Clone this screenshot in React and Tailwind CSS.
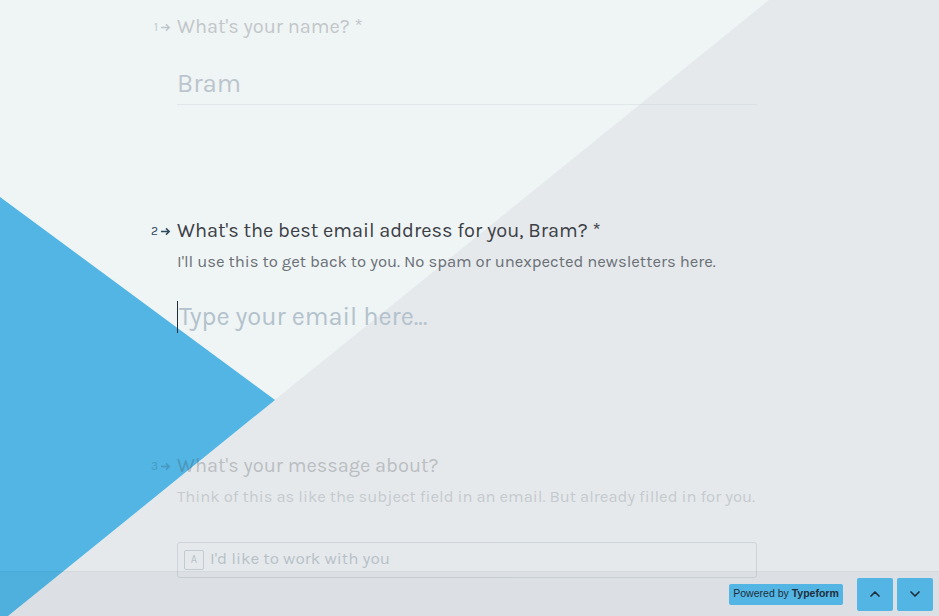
import { ChevronUp, ChevronDown } from "lucide-react";

const font = { fontFamily: "Karla, Lato, 'Noto Sans', sans-serif" };

function Num({ n }) {
  return (
    <span className="-ml-[28px] w-[28px] flex items-center text-[12px] text-[#2d4a5e] pr-[6px] justify-end gap-[3px]">
      <span>{n}</span>
      <svg width="10" height="9" viewBox="0 0 10 9" className="mt-[1px]">
        <path d="M0 4.5h8M5 1.4L8.2 4.5 5 7.6" stroke="currentColor" strokeWidth="1.5" fill="none" />
      </svg>
    </span>
  );
}

export default function App() {
  return (
    <div className="relative w-[939px] h-[616px] overflow-hidden bg-[#eff4f5]" style={font}>
      {/* background shapes */}
      <svg className="absolute inset-0 w-full h-full" viewBox="0 0 939 616" preserveAspectRatio="none">
        <polygon points="769,0 939,0 939,616 8,616" fill="#e5e9ec" />
        <polygon points="0,197 275,400 8,616 0,616" fill="#52b5e4" />
      </svg>

      <div className="relative ml-[177px] w-[580px] flex flex-col">
        {/* question 1 */}
        <div className="opacity-25 pt-[13px]">
          <div className="flex items-center h-[28px]">
            <Num n="1" />
            <span className="text-[20px] text-[#3c4046]">What's your name? *</span>
          </div>
          <div className="mt-[21px] h-[43px] flex items-center border-b border-[#b3c3ce] text-[26px] text-[#1f3a55]">
            Bram
          </div>
        </div>

        {/* question 2 */}
        <div className="mt-[112px]">
          <div className="flex items-center h-[28px]">
            <Num n="2" />
            <span className="text-[20px] text-[#3c4046]">What's the best email address for you, Bram? *</span>
          </div>
          <div className="mt-[5px] h-[24px] flex items-center text-[16.65px] text-[#6b7076]">
            I'll use this to get back to you. No spam or unexpected newsletters here.
          </div>
          <div className="mt-[22px] h-[42px] flex items-center text-[25.4px] text-[#b3c2cc]">
            <span className="w-[1px] h-[32px] bg-[#1f2d3a] mr-[1px]" />
            Type your email here...
          </div>
        </div>

        {/* question 3 */}
        <div className="mt-[114px] opacity-25">
          <div className="flex items-center h-[28px]">
            <Num n="3" />
            <span className="text-[20px] text-[#3c4046]">What's your message about?</span>
          </div>
          <div className="mt-[5px] h-[24px] flex items-center text-[16.65px] text-[#6b7076]">
            Think of this as like the subject field in an email. But already filled in for you.
          </div>
          <div className="mt-[33px] h-[36px] flex items-center gap-[6px] px-[6px] border border-[#8b9aa5] rounded-[3px]">
            <span className="w-[20px] h-[20px] flex items-center justify-center border border-[#5e7585] rounded-[2px] text-[11px] text-[#2d4a5e]">
              A
            </span>
            <span className="text-[17px] text-[#2d4a5e] -mt-[2px]">I'd like to work with you</span>
          </div>
        </div>
      </div>

      {/* bottom bar */}
      <div className="absolute left-0 right-0 bottom-0 h-[45px] bg-[rgba(20,40,60,0.045)] border-t border-[rgba(20,40,60,0.04)] flex items-center justify-end pr-[6px]">
        <div className="h-[21px] w-[114px] flex items-center justify-center rounded-[2px] bg-[#52b5e4] text-[10.5px] text-[#1f2d3a] mr-[14px]" style={{ fontFamily: "'Liberation Sans', Arial, sans-serif" }}>
          Powered by&nbsp;<span className="font-bold">Typeform</span>
        </div>
        <div className="flex gap-[4px]">
          <button className="w-[36px] h-[33px] rounded-[2px] bg-[#52b5e4] flex items-center justify-center text-[#1f2d3a]">
            <ChevronUp size={16} strokeWidth={2.5} />
          </button>
          <button className="w-[36px] h-[33px] rounded-[2px] bg-[#52b5e4] flex items-center justify-center text-[#1f2d3a]">
            <ChevronDown size={16} strokeWidth={2.5} />
          </button>
        </div>
      </div>
    </div>
  );
}
